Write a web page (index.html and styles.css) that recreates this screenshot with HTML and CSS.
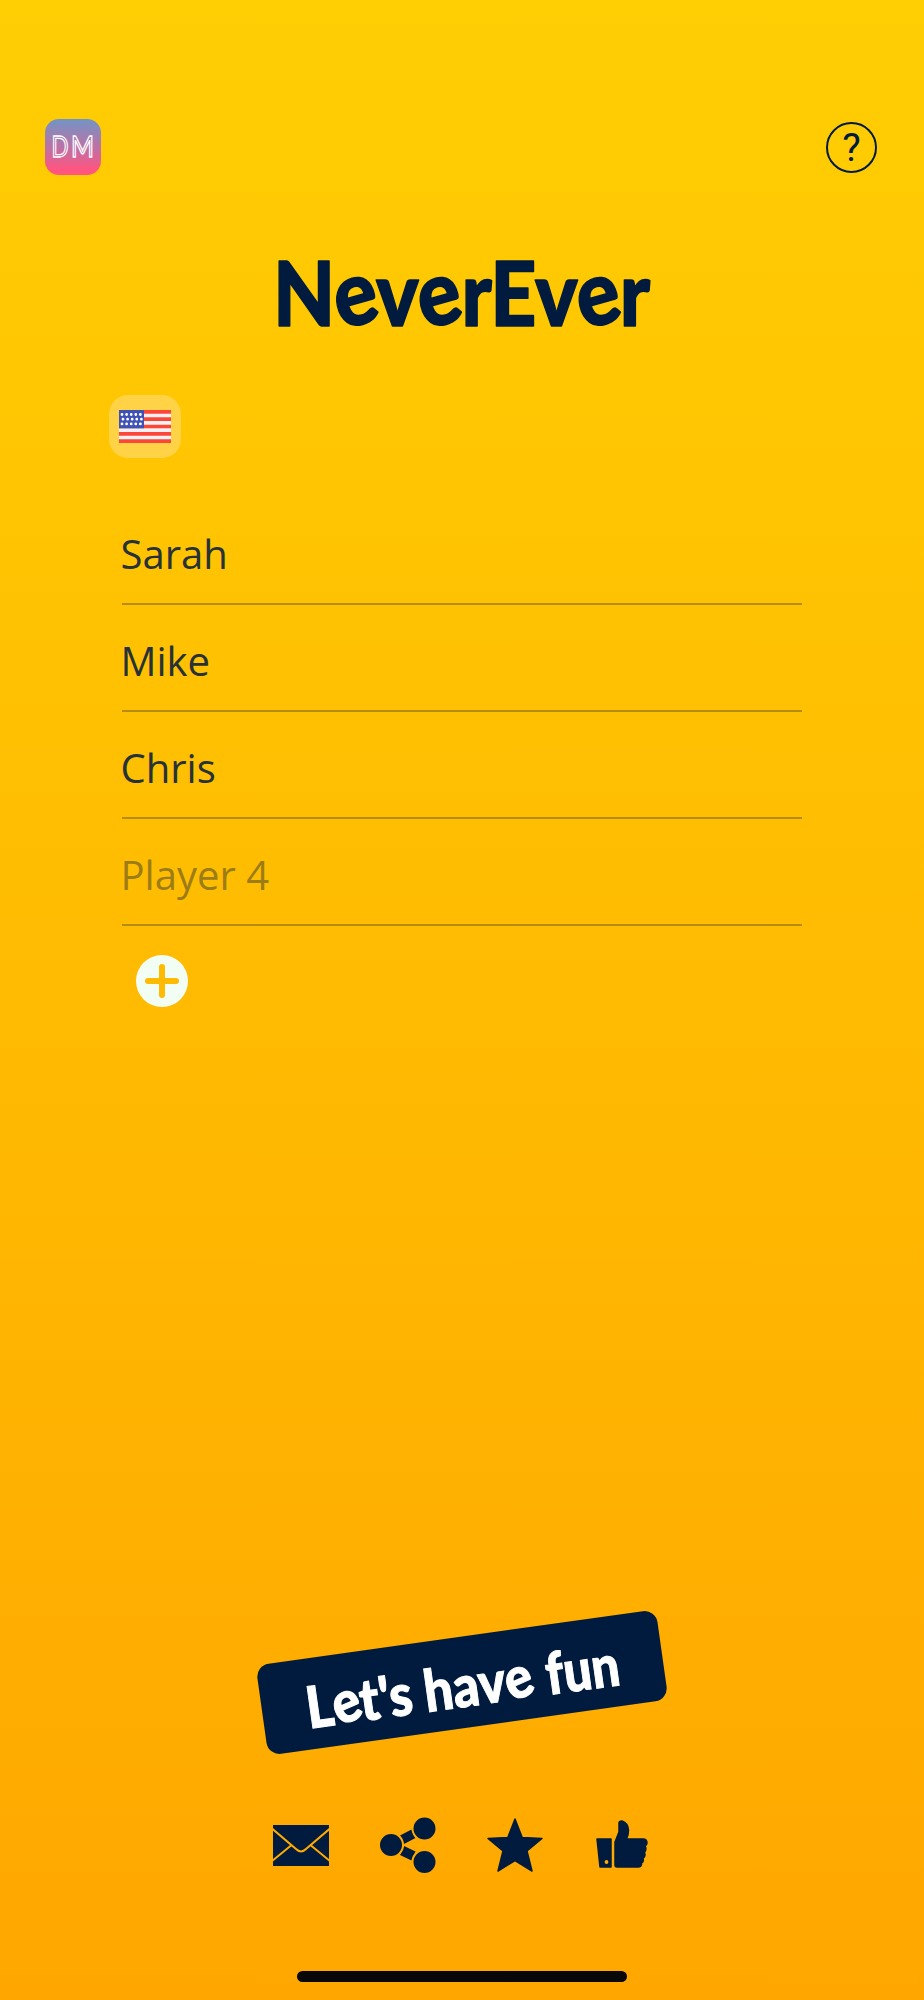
FILE: index.html
```html
<!DOCTYPE html>

<html lang="en">
	<head>
		<meta charset="UTF-8" />
		<title>NeverEver</title>
		<link rel="stylesheet" href="styles.css">
	</head>
	<body>
		<header>
			<svg class="logo" viewBox="0 0 56 56">
				<text class="logo-text" x="6.500" y="38" textLength="17" lengthAdjust="spacingAndGlyphs">D</text>
				<text class="logo-text" x="26" y="38" textLength="23" lengthAdjust="spacingAndGlyphs">M</text>
			</svg>
			<div class="help">?</div>
		</header>
		<h1>
			<svg class="title" viewBox="0 0 400 140">
				<text x="8" y="100" textLength="377" lengthAdjust="spacingAndGlyphs" rotate="0 -14 0 -14 0 0 0 -14 0" dx="0 7 -7 7 -6 -1 0 7 -7" dy="0 4 -4 4 -4 0 0 4 -4">NeverEver</text>
			</svg>
		</h1>
		<div class="language">
			<svg width="52" height="33" viewBox="0 0 52 33">
				<path fill="#f3f1f3" d="M0 0H52V33H0z"/>
				<path stroke="#fb4638" stroke-width="3.670" d="M0 1.830H52M0 9.170H52M0 16.500H52M0 23.830H52M0 31.170H52"/>
				<path fill="#3f51b5" d="M0 0H25V18.300H0z"/>
				<path stroke="#fff" stroke-width="2.800" stroke-linecap="round" stroke-dasharray="0 4.600" d="M3 4.500H22M4 9.200H23M3 13.900H22"/>
			</svg>
		</div>
		<div id="players">
			<div class="player">Sarah</div>
			<div class="player">Mike</div>
			<div class="player">Chris</div>
			<div class="player empty">Player 4</div>
		</div>
		<svg class="add" viewBox="0 0 52 52">
			<circle cx="26" cy="26" r="26" fill="#f2fef3"/>
			<path stroke="#ffba02" stroke-width="6" stroke-linecap="round" d="M12 26H40M26 12V40"/>
		</svg>
		<div class="start">
			<svg width="404" height="91" viewBox="0 0 404 91">
				<text x="44" y="70" textLength="107" lengthAdjust="spacingAndGlyphs" rotate="0 -14 0" dx="0 5 -5" dy="0 2 -2">Let's</text>
				<text x="163" y="70" textLength="113" lengthAdjust="spacingAndGlyphs" rotate="0 0 0 -14" dx="0 0 0 5" dy="0 0 0 2">have</text>
				<text x="286" y="70" textLength="74" lengthAdjust="spacingAndGlyphs">fun</text>
			</svg>
		</div>
		<div class="links">
			<!-- mail -->
			<svg viewBox="0 0 56 56">
				<path d="M0 8H56V49H0z"/>
				<path class="gap" d="M-1 11.500L23 32Q28 37 33 32L57 11.500M18 28.500L-1 44M38 28.500L57 44"/>
			</svg>
			<!-- share -->
			<svg viewBox="0 0 56 56">
				<path d="M20 18.500L31.500 12.500L35.500 21L24 27zM24 29L35.500 34.500L31.500 43.500L20 38z"/>
				<circle class="gap-ring" cx="11" cy="28" r="12"/>
				<circle class="gap-ring" cx="44.500" cy="11.500" r="12"/>
				<circle class="gap-ring" cx="44.500" cy="45" r="12"/>
			</svg>
			<!-- rate -->
			<svg viewBox="0 0 56 56">
				<path class="round" d="M28 2L35.200 20.500L55 21.500L40 34L45 54L28 43.500L11 54L16 34L1 21.500L20.800 20.500z"/>
			</svg>
			<!-- like -->
			<svg viewBox="0 0 56 56">
				<path class="round" d="M3 22H17V50H6z"/>
				<circle class="dot" cx="12.500" cy="45" r="1.900"/>
				<path class="round" d="M21 25L25 15V6Q25 4 28 4Q34 6 34.500 13Q34.500 18 32.500 22H49Q53 22 53 26Q53 28 51 29Q53 32 50.500 35.500Q52 39 49 41.500Q50 45 47.500 46Q48 50 44 50H23Q21 50 21 48z"/>
			</svg>
		</div>
		<div class="home-bar"></div>
	</body>
</html>
```

FILE: styles.css
```css
* {
	box-sizing: border-box;
}
body {
	display: flex;
	flex-direction: column;
	height: 2000px;
	margin: 0;
	background: linear-gradient(#ffce03, #ffa700);
	color: #001b3e;
	font-family: 'Open Sans', sans-serif;
}
svg {
	display: block;
	flex: none;
}
header {
	display: flex;
	justify-content: space-between;
	align-items: center;
	padding: 119px 47px 0 45px;
}
.logo {
	width: 56px;
	height: 56px;
	border-radius: 14px;
	background: linear-gradient(#7195c5, #c26fa3 55%, #ff5580 90%);
}
.logo-text {
	font: 28px Lato, sans-serif;
	fill: none;
	stroke: #fff;
	stroke-width: 1.3;
}
.help {
	width: 51px;
	height: 51px;
	border: 2px solid #001b3e;
	border-radius: 50%;
	font: 39px/48px Roboto, sans-serif;
	text-align: center;
}
h1 {
	margin: 51px 0 0 265px;
}
.title {
	width: 400px;
	height: 140px;
	font: 900 90px Lato, sans-serif;
	fill: #001b3e;
	stroke: #001b3e;
	stroke-width: 1.5;
	stroke-linejoin: round;
}
.language {
	display: flex;
	justify-content: center;
	align-items: center;
	width: 72px;
	height: 63px;
	margin: 29px 0 0 109px;
	border-radius: 19px;
	background: #ffd345;
}
#players {
	margin: 40px 122px 0;
}
.player {
	height: 107px;
	padding-top: 29px;
	border-bottom: 2px solid #b58c15;
	color: #263238;
	font-size: 40px;
	line-height: 54px;
	text-indent: -1.5px;
}
.empty {
	color: #9c7c18;
}
.add {
	width: 52px;
	height: 52px;
	margin: 29px 0 0 136px;
}
.start {
	width: 404px;
	height: 91px;
	margin: 630px auto 0;
	border-radius: 13px;
	background: #001b3e;
	transform: rotate(-8deg);
}
.start text {
	font: 900 58px Lato, sans-serif;
	fill: #fff;
	stroke: #fff;
}
.links {
	display: flex;
	justify-content: center;
	gap: 51px;
	margin-top: 89px;
	padding-right: 1px;
}
.links svg {
	width: 56px;
	height: 56px;
	fill: #001b3e;
}
.gap {
	fill: none;
	stroke: #ffaa00;
	stroke-width: 2;
}
.gap-ring {
	stroke: #ffaa00;
	stroke-width: 2;
}
.round {
	stroke: #001b3e;
	stroke-width: 1.5;
	stroke-linejoin: round;
}
.dot {
	fill: #ffaa00;
}
.home-bar {
	width: 330px;
	height: 11px;
	margin: auto auto 18px;
	border-radius: 6px;
	background: #080808;
}
```
